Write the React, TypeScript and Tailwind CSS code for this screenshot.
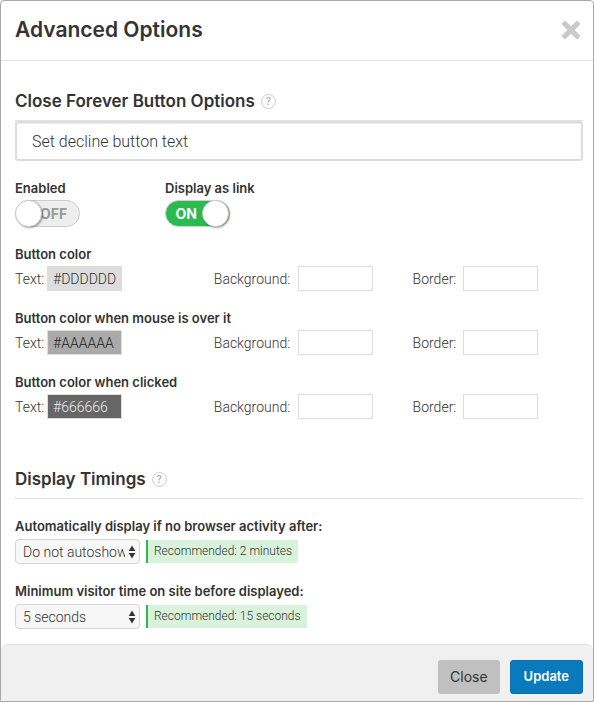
import type { ReactNode } from "react";

const swatchRows = [
  { title: "Button color", id: "normal", value: "#DDDDDD", tone: "bg-[#dddddd] text-[#333]" },
  { title: "Button color when mouse is over it", id: "hover", value: "#AAAAAA", tone: "bg-[#aaaaaa] text-[#222]" },
  { title: "Button color when clicked", id: "active", value: "#666666", tone: "bg-[#666666] text-[#eee]" },
];

const lightFont = "font-['Roboto','Liberation_Sans',sans-serif] font-light";
const swatchBox = "h-[25px] w-[75px] shrink-0 border border-[#ddd] px-[5px] text-sm outline-none";

function HelpButton({ label }: { label: string }) {
  return (
    <button
      type="button"
      aria-label={label}
      className="flex size-[15px] items-center justify-center rounded-full border border-[#ccc] text-[10px] leading-none font-medium text-[#aaa]"
    >
      ?
    </button>
  );
}

function SectionHeading({ children, help }: { children: ReactNode; help: string }) {
  return (
    <div className="flex items-center gap-1.5 border-b border-[#e2e2e2] pb-[7px]">
      <h2 className="text-[17px] leading-6 font-semibold">{children}</h2>
      <HelpButton label={help} />
    </div>
  );
}

function Toggle({ id, label, on }: { id: string; label: string; on?: boolean }) {
  return (
    <div className="w-[150px]">
      <label htmlFor={id} className="block text-[13px] leading-6 font-semibold whitespace-nowrap">
        {label}
      </label>
      <label
        htmlFor={id}
        className="group flex h-[27px] w-[65px] cursor-pointer items-center rounded-full border border-[#ccc] bg-[#eee] text-sm font-bold text-[#999] has-checked:flex-row-reverse has-checked:border-[#c8d8cc] has-checked:bg-[#2aba50] has-checked:text-white"
      >
        <input id={id} type="checkbox" defaultChecked={on} className="peer sr-only" />
        <span className="z-10 -my-px -ml-px size-[27px] shrink-0 rounded-full border border-[#ccc] bg-white shadow-[1px_1px_2px_rgba(0,0,0,0.35)] peer-checked:ml-0" />
        <span className="-ml-0.5 group-has-checked:hidden">OFF</span>
        <span className="mr-[5px] hidden group-has-checked:inline">ON</span>
      </label>
    </div>
  );
}

function SwatchField({
  id,
  label,
  labelWidth,
  value,
  tone = "bg-white",
}: {
  id: string;
  label: string;
  labelWidth: string;
  value?: string;
  tone?: string;
}) {
  return (
    <div className={`flex items-center ${lightFont}`}>
      <label htmlFor={id} className={`shrink-0 text-sm ${labelWidth}`}>
        {label}
      </label>
      <input id={id} type="text" defaultValue={value} className={`${swatchBox} ${tone}`} />
    </div>
  );
}

function TimingField({ id, label, option, hint }: { id: string; label: string; option: string; hint: string }) {
  return (
    <div>
      <label htmlFor={id} className="block text-[13px] leading-[26px] font-semibold">
        {label}
      </label>
      <div className={`flex items-center gap-1.5 ${lightFont}`}>
        <div className="relative w-[125px]">
          <select
            id={id}
            className="block h-[25px] w-full appearance-none rounded-[4px] border border-[#d4d4d4] bg-[#f7f7f7] pr-3.5 pl-[7px] text-sm outline-none"
          >
            <option>{option}</option>
          </select>
          <svg viewBox="0 0 8 14" className="pointer-events-none absolute top-[6px] right-1 h-[14px] w-2 fill-[#333]">
            <path d="M4 0.5 7.3 6H0.7zM4 13.5 0.7 8H7.3z" />
          </svg>
        </div>
        <p className="border-l-2 border-[#2aba50] bg-[#d9f2dc] px-1.5 text-xs leading-[23px]">{hint}</p>
      </div>
    </div>
  );
}

export default function App() {
  return (
    <div
      role="dialog"
      aria-labelledby="dialog-title"
      className="flex min-h-screen flex-col rounded-t-[4px] border border-[#a8a8a8] bg-white font-['Inter','Liberation_Sans',sans-serif] text-[#333]"
    >
      <header className="flex items-center justify-between border-b border-[#e2e2e2] pt-[11px] pr-3 pb-[13px] pl-3.5">
        <h1 id="dialog-title" className="text-[21px] leading-[35px] font-semibold">
          Advanced Options
        </h1>
        <button type="button" aria-label="Close dialog" className="block">
          <svg viewBox="0 0 20 20" className="block size-5">
            <path
              d="M4 1.5 10 7.4 16 1.5 18.5 4 12.6 10 18.5 16 16 18.5 10 12.6 4 18.5 1.5 16 7.4 10 1.5 4Z"
              fill="#cacaca"
              stroke="#cacaca"
              strokeWidth="1.6"
              strokeLinejoin="round"
            />
          </svg>
        </button>
      </header>

      <main className="grow px-3.5 pr-2.5 pt-7 pb-[15px]">
        <section>
          <SectionHeading help="About the close forever button">Close Forever Button Options</SectionHeading>
          <input
            type="text"
            aria-label="Decline button text"
            defaultValue="Set decline button text"
            className={`block h-10 w-full rounded-[3px] border-2 border-[#ddd] px-[15px] text-base shadow-[inset_0_1px_1px_rgba(0,0,0,0.08)] outline-none ${lightFont}`}
          />
          <div className="mt-[15px] flex">
            <Toggle id="enabled" label="Enabled" />
            <Toggle id="as-link" label="Display as link" on />
          </div>
          <div className="mt-[15px] flex flex-col gap-[15px]">
            {swatchRows.map((row) => (
              <div key={row.id}>
                <h3 className="text-[13px] leading-6 font-semibold">{row.title}</h3>
                <div className="grid grid-cols-[35%_35%_30%]">
                  <SwatchField id={`${row.id}-text`} label="Text:" labelWidth="w-8" value={row.value} tone={row.tone} />
                  <SwatchField id={`${row.id}-background`} label="Background:" labelWidth="w-[84px]" />
                  <SwatchField id={`${row.id}-border`} label="Border:" labelWidth="w-[50px]" />
                </div>
              </div>
            ))}
          </div>
        </section>

        <section className="mt-12">
          <SectionHeading help="About display timings">Display Timings</SectionHeading>
          <div className="mt-3.5 flex flex-col gap-3.5">
            <TimingField
              id="autoshow"
              label="Automatically display if no browser activity after:"
              option="Do not autoshow"
              hint="Recommended: 2 minutes"
            />
            <TimingField
              id="min-time"
              label="Minimum visitor time on site before displayed:"
              option="5 seconds"
              hint="Recommended: 15 seconds"
            />
          </div>
        </section>
      </main>

      <footer className="flex justify-end gap-2.5 rounded-t-[6px] border-t border-[#e0e0e0] bg-[#f0f0f0] pt-[15px] pr-2.5 pb-[7px]">
        <button type="button" className="h-[34px] rounded-[3px] bg-[#c0c0c0] px-3 text-sm">
          Close
        </button>
        <button
          type="button"
          className="h-[34px] rounded-[3px] border border-[#0b70b5] bg-[#0a7abf] px-[13px] text-[13px] font-semibold text-white"
        >
          Update
        </button>
      </footer>
    </div>
  );
}
